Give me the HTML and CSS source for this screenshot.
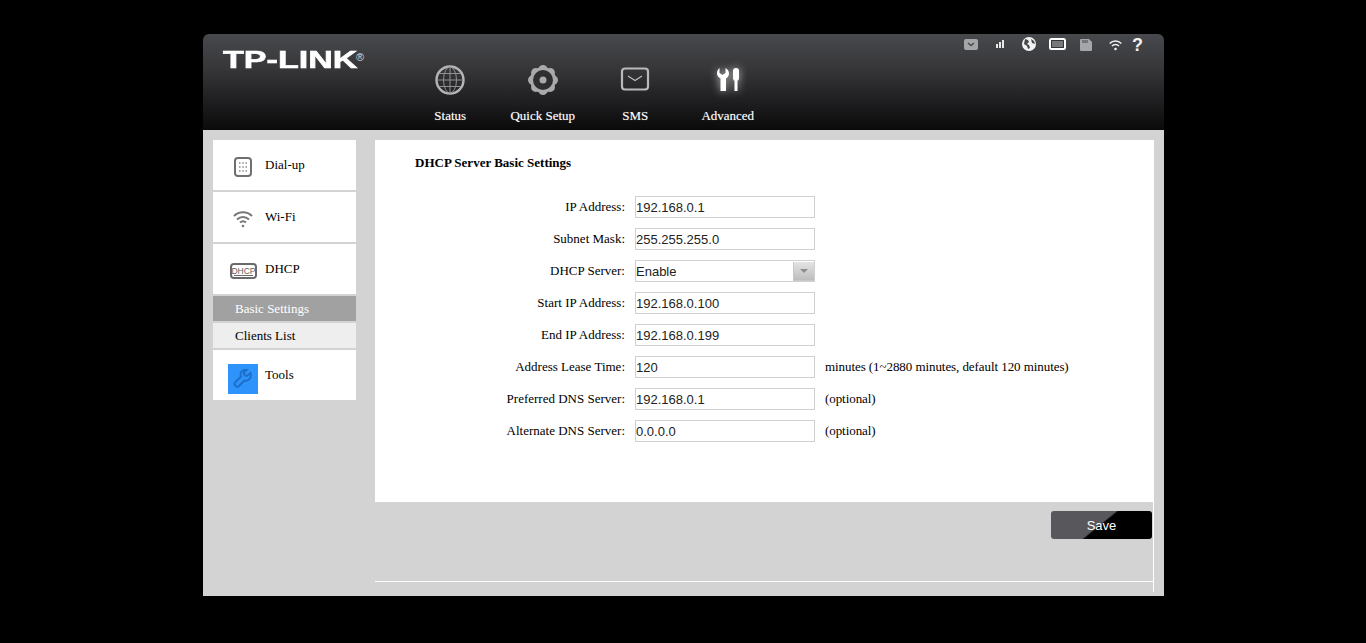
FILE: index.html
```html
<!DOCTYPE html>
<html lang="en">
<head>
	<meta charset="UTF-8">
	<title>TP-LINK DHCP Server</title>
	<link rel="stylesheet" href="styles.css">
</head>
<body>
	<div class="frame">
		<div class="header">
			<div class="logo"><span class="logo-text">TP-LINK</span><span class="logo-reg">&reg;</span></div>
			<ul class="nav">
				<li>
					<svg width="32" height="32" viewBox="0 0 32 32" fill="none" stroke="#8f9092"><circle cx="16" cy="16" r="13.5" stroke="#b4b5b6" stroke-width="2.4"/><ellipse cx="16" cy="16" rx="6.5" ry="13"/><path d="M16 3v26M3 16h26M5 9.5h22M5 22.5h22"/></svg>
					<span>Status</span>
				</li>
				<li>
					<svg width="32" height="32" viewBox="0 0 32 32">
						<g fill="#a8a9aa"><circle cx="16" cy="16" r="13"/><circle cx="16" cy="5.5" r="4.5"/><circle cx="16" cy="26.5" r="4.5"/><circle cx="5.5" cy="16" r="4.5"/><circle cx="26.5" cy="16" r="4.5"/><circle cx="8.6" cy="8.6" r="4.5"/><circle cx="23.4" cy="8.6" r="4.5"/><circle cx="8.6" cy="23.4" r="4.5"/><circle cx="23.4" cy="23.4" r="4.5"/></g>
						<circle cx="16" cy="16" r="10" fill="#2e2e30"/><circle cx="16" cy="16" r="3.5" fill="#a8a9aa"/>
					</svg>
					<span>Quick Setup</span>
				</li>
				<li>
					<svg width="32" height="32" viewBox="0 0 32 32" fill="none" stroke="#b8b9ba"><rect x="3" y="4.500" width="26" height="21" rx="3" stroke-width="2.200"/><path d="M9 12l7 4.500 7-4.500" stroke-width="1.400"/></svg>
					<span>SMS</span>
				</li>
				<li>
					<svg class="glow" width="32" height="32" viewBox="0 0 32 32" fill="#fff"><path d="M7.500 4v5l3 2 3-2V4c2 1 3.500 3 3.500 5.500 0 2.500-1.500 4-3 5V27H8.500V14.500c-2-1-3.500-2.800-3.500-5C5 7 6 5 7.500 4z"/><rect x="21" y="4" width="6" height="13" rx="3"/><rect x="22.500" y="16" width="3" height="11"/></svg>
					<span>Advanced</span>
				</li>
			</ul>
			<div class="status">
				<svg width="14" height="11" viewBox="0 0 14 11"><rect width="14" height="11" rx="2" fill="#a5a6a7"/><path d="M4 4l3 2.500L10 4" fill="none" stroke="#4a4a4d" stroke-width="1.500"/></svg>
				<svg class="s-signal" width="8" height="8" viewBox="0 0 8 8" fill="#e8e8e8"><rect y="4" width="2" height="4"/><rect x="3" y="2" width="2" height="6"/><rect x="6" width="2" height="8"/></svg>
				<svg class="s-globe" width="14" height="14" viewBox="0 0 14 14"><circle cx="7" cy="7" r="7" fill="#f2f2f2"/><path d="M3 2l3 1 1 2-2 2 2 1 1 3-2 1-1-3-3-2zM9 2l3 2 1 3-3-1z" fill="#47484b"/></svg>
				<svg class="s-batt" width="17" height="12" viewBox="0 0 17 12"><rect x="1" y="1" width="15" height="10" rx="1.500" fill="#333436" stroke="#fff" stroke-width="2"/><rect x="3" y="3" width="11" height="6" fill="#77787a"/></svg>
				<svg class="s-sd" width="12" height="12" viewBox="0 0 12 12"><path d="M1 0h8l3 3v8a1 1 0 0 1-1 1H1a1 1 0 0 1-1-1V1a1 1 0 0 1 1-1z" fill="#a5a6a7"/><path d="M3 1v3M5 1v3M7 1v3" stroke="#47484b"/></svg>
				<svg class="s-wifi" width="13" height="12" viewBox="0 0 13 12" fill="none" stroke="#f2f2f2" stroke-width="1.600"><path d="M.7 4.500c3.300-3.300 8.300-3.300 11.600 0M3 7c2-2 5-2 7 0"/><circle cx="6.500" cy="10" r="1.300" fill="#f2f2f2" stroke="none"/></svg>
				<span class="s-help">?</span>
			</div>
		</div>
		<div class="main">
			<div class="side">
				<div class="side-item">
					<span class="side-icon"><svg width="18" height="20" viewBox="0 0 18 20" fill="none"><rect x="1" y="1" width="16" height="18" rx="3" stroke="#6f6f6f" stroke-width="2"/><path d="M5 6h1.500M8.300 6h1.500M11.500 6h1.500M5 10h1.500M8.300 10h1.500M11.500 10h1.500M5 14h1.500M8.300 14h1.500M11.500 14h1.500" stroke="#8a8a8a" stroke-width="1.500"/></svg></span>
					Dial-up
				</div>
				<div class="side-item">
					<span class="side-icon"><svg width="20" height="18" viewBox="0 0 20 18" fill="none" stroke="#777" stroke-width="2"><path d="M1 6c5-5 13-5 18 0M4 9.500c3.500-3.500 8.500-3.500 12 0M7 12.500c1.700-1.500 4.300-1.500 6 0"/><circle cx="10" cy="16" r="1.300" fill="#777" stroke="none"/></svg></span>
					Wi-Fi
				</div>
				<div class="side-item">
					<span class="side-icon"><svg width="27" height="16" viewBox="0 0 27 16"><rect x="1" y="1" width="25" height="14" rx="3" fill="none" stroke="#6a6a6a" stroke-width="2"/><text x="13.500" y="10.500" class="dhcp-mark">DHCP</text><path d="M4 12.500h19" stroke="#6a6a6a"/></svg></span>
					DHCP
				</div>
				<div class="side-sub active">Basic Settings</div>
				<div class="side-sub">Clients List</div>
				<div class="side-item">
					<span class="side-icon tools-icon"><svg width="20" height="20" viewBox="0 0 20 20" fill="none" stroke="#1d6fc9" stroke-width="2"><path d="M17.500 4l-3.500 3-2.500-.7-.7-2.500 3-3C10.500.2 7.500 2.500 7.500 5.500c0 .8.200 1.500.5 2L2 13.500C.5 15 3.500 19 5.500 17.500l6-6c3.500 1.200 7.500-2.500 6-7.500z"/></svg></span>
					Tools
				</div>
			</div>
			<div class="page">
				<div class="panel">
					<h2>DHCP Server Basic Settings</h2>
					<div class="form">
						<label>IP Address:</label>
						<div class="field">192.168.0.1</div>
						<span></span>
						<label>Subnet Mask:</label>
						<div class="field">255.255.255.0</div>
						<span></span>
						<label>DHCP Server:</label>
						<div class="field select">Enable<span class="arrow"></span></div>
						<span></span>
						<label>Start IP Address:</label>
						<div class="field">192.168.0.100</div>
						<span></span>
						<label>End IP Address:</label>
						<div class="field">192.168.0.199</div>
						<span></span>
						<label>Address Lease Time:</label>
						<div class="field">120</div>
						<span class="hint">minutes (1~2880 minutes, default 120 minutes)</span>
						<label>Preferred DNS Server:</label>
						<div class="field">192.168.0.1</div>
						<span class="hint">(optional)</span>
						<label>Alternate DNS Server:</label>
						<div class="field">0.0.0.0</div>
						<span class="hint">(optional)</span>
					</div>
				</div>
				<div class="foot">
					<button class="save">Save</button>
					<div class="foot-rule"></div>
				</div>
			</div>
		</div>
	</div>
</body>
</html>
```

FILE: styles.css
```css
html,body{margin:0;padding:0;background:#000;}
body{font-family:"Liberation Serif","Times New Roman",serif;font-size:13px;color:#000;}
ul{list-style:none;margin:0;padding:0;}

.frame{width:961px;margin:34px 0 0 203px;}

/* top bar */
.header{display:flex;height:96px;box-sizing:border-box;border-radius:6px 6px 0 0;background:linear-gradient(#48494c,#37373a 35%,#0a0a0b);}
.logo{display:flex;align-items:flex-start;width:201px;flex:none;padding-top:13px;box-sizing:border-box;padding-left:20px;color:#fff;}
.logo-text{display:block;width:133px;font:bold 24px/26px "Liberation Sans",Arial,sans-serif;-webkit-text-stroke:0.6px #fff;transform:scaleX(1.42);transform-origin:left top;}
.logo-reg{font:11px/12px "Liberation Sans",Arial,sans-serif;color:#ddd;margin-top:4px;}

.nav{display:flex;flex:none;}
.nav li{display:flex;flex-direction:column;align-items:center;width:92.5px;padding-top:30px;box-sizing:border-box;color:#fff;text-shadow:0 0 1px rgba(255,255,255,0.4);}
.nav span{margin-top:12px;line-height:15px;white-space:nowrap;}
.glow{filter:drop-shadow(0 0 4px rgba(255,255,255,0.7));}

.status{display:flex;flex:1;align-items:flex-start;padding:5px 0 0 190px;box-sizing:border-box;}
.status svg{display:block;flex:none;}
.s-signal{margin:1px 0 0 18px;}
.s-globe{margin:-2px 0 0 18px;}
.s-batt{margin:-1px 0 0 13px;}
.s-sd{margin:0 0 0 14px;}
.s-wifi{margin:0 0 0 17px;}
.s-help{margin:-4px 0 0 10px;font:bold 18px/20px "Liberation Sans",Arial,sans-serif;color:#f2f2f2;}

/* body */
.main{display:flex;height:466px;box-sizing:border-box;padding:10px 10px 0;gap:19px;background:#d3d3d3;}

.side{display:flex;flex-direction:column;gap:2px;width:143px;flex:none;}
.side-item{display:flex;align-items:center;height:50px;padding-left:15px;gap:7px;background:#fff;}
.side-icon{display:flex;align-items:center;justify-content:center;width:30px;height:30px;flex:none;}
.side-icon svg{margin-top:4px;}
.tools-icon{margin-top:8px;background:#2e94fb;}
.tools-icon svg{margin-top:0;}
.dhcp-mark{font:8.5px "Liberation Sans",Arial,sans-serif;fill:#5f5f5f;text-anchor:middle;}
.side-sub{height:25px;line-height:26px;padding-left:22px;background:#eee;}
.side-sub.active{background:#a1a1a1;color:#fff;}

.page{display:flex;flex-direction:column;flex:1;}
.panel{height:362px;box-sizing:border-box;padding:15px 40px 0;background:#fff;}
.panel h2{margin:0;font-size:13px;line-height:16px;font-weight:bold;}

.form{display:grid;grid-template-columns:210px 180px 1fr;grid-auto-rows:22px;column-gap:10px;row-gap:10px;align-items:center;margin-top:25px;}
.form label{text-align:right;}
.field{position:relative;height:22px;box-sizing:border-box;border:1px solid #d0d0d0;font:13px/21px "Liberation Sans",Arial,sans-serif;color:#222;}
.arrow{position:absolute;right:0;top:1px;width:20px;height:18px;border:1px solid #c8c8c8;border-width:0 0 1px 1px;background:linear-gradient(#e4e4e4,#bdbdbd);}
.arrow:after{content:"";position:absolute;left:6px;top:7px;border:4px solid transparent;border-top-color:#8d8d8d;border-bottom:0;}
.hint{white-space:nowrap;letter-spacing:-0.07px;}

.foot{display:flex;flex-direction:column;align-items:flex-end;height:90px;box-sizing:border-box;border-right:1px solid #fff;}
.save{width:101px;height:28px;margin:9px 1px 0 0;padding:0;border:0;border-radius:3px;background:linear-gradient(141deg,#58585c 48%,#000 50%);color:#fff;font:13px "Liberation Sans",Arial,sans-serif;}
.foot-rule{width:100%;height:1px;margin-top:42px;background:#fff;}
```
